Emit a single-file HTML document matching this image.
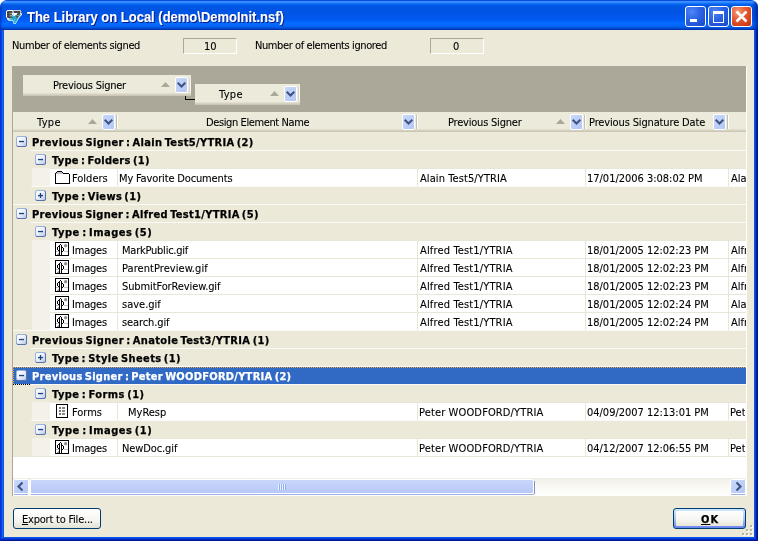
<!DOCTYPE html>
<html><head><meta charset="utf-8"><title>The Library on Local</title>
<style>
html,body{margin:0;padding:0;background:#fff;}
body{width:758px;height:541px;position:relative;overflow:hidden;font-family:'DejaVu Sans Condensed','Liberation Sans',sans-serif;font-size:11px;line-height:14px;color:#000;}
#win{position:absolute;left:0;top:0;width:758px;height:541px;border-radius:7px 7px 0 0;overflow:hidden;background:#ECE9D8;}
#win div,#win svg,#win span.t{position:absolute;}
span.t{white-space:pre;font-size:11px;line-height:14px;-webkit-text-stroke:0.1px currentColor;}
span.b{font-weight:bold;-webkit-text-stroke:0.25px currentColor;}
span.tt{color:#fff;font-family:'Liberation Sans',sans-serif;font-size:14px;line-height:17px;font-weight:bold;transform-origin:0 0;text-shadow:1px 1px 0 #0A1883;}
#title{left:0;top:0;width:758px;height:30px;background:linear-gradient(to bottom,#0A4CE0 0.5px,#3A90FF 1.5px,#2E88FF 2.5px,#1572F6 3.5px,#0662EC 4.5px,#0059E6 5.5px,#0057E5 6.5px,#0056E4 7.5px,#0055E3 8.5px,#0054E3 9.5px,#0054E3 10.5px,#0054E3 11.5px,#0054E3 12.5px,#0055E4 13.5px,#0055E6 14.5px,#0056E8 15.5px,#0057EA 16.5px,#0058EC 17.5px,#0059EF 18.5px,#005BF2 19.5px,#005EF6 20.5px,#0263FA 21.5px,#0368FD 22.5px,#046BFE 23.5px,#046AFD 24.5px,#0466F8 25.5px,#0460EE 26.5px,#0356E0 27.5px,#0248CC 28.5px,#0034B0 29.5px);}
.tb{width:19px;height:19px;border:1px solid #fff;border-radius:3px;top:6px;}
</style></head><body>
<div id="win">
<svg width="0" height="0" style="left:0;top:0"><defs>
<linearGradient id="eg" x1="0" y1="0" x2="1" y2="1"><stop offset="0" stop-color="#fff"/><stop offset="0.45" stop-color="#EEF2FC"/><stop offset="1" stop-color="#B4C5EA"/></linearGradient>
<linearGradient id="bg" x1="0" y1="0" x2="1" y2="1"><stop offset="0" stop-color="#C9D8FB"/><stop offset="1" stop-color="#B3C7F4"/></linearGradient>
</defs></svg>
<div id="title"></div>
<div style="left:752px;top:1px;width:6px;height:29px;background:linear-gradient(to right,rgba(0,30,170,0),rgba(0,24,150,0.75))"></div>
<div style="left:0;top:1px;width:3px;height:29px;background:linear-gradient(to right,rgba(0,30,170,0.55),rgba(0,30,170,0))"></div>
<!-- borders -->
<div style="left:0;top:30px;width:1px;height:511px;background:#0831D9"></div>
<div style="left:1px;top:30px;width:1px;height:511px;background:#0A42DE"></div>
<div style="left:2px;top:30px;width:1px;height:511px;background:#1466EE"></div>
<div style="left:3px;top:30px;width:1px;height:507px;background:#0A55E2"></div>
<div style="left:754px;top:30px;width:1px;height:507px;background:#1455E6"></div>
<div style="left:755px;top:30px;width:1px;height:511px;background:#0A3CD0"></div>
<div style="left:756px;top:30px;width:1px;height:511px;background:#0020A8"></div>
<div style="left:757px;top:30px;width:1px;height:511px;background:#00138C"></div>
<div style="left:3px;top:537px;width:752px;height:1px;background:#0A55E8"></div>
<div style="left:2px;top:538px;width:754px;height:1px;background:#0A3FD8"></div>
<div style="left:1px;top:539px;width:756px;height:1px;background:#0026C0"></div>
<div style="left:0;top:540px;width:758px;height:1px;background:#001A9A"></div>
<!-- app icon -->
<svg style="left:6px;top:10px" width="16" height="14" viewBox="0 0 16 14">
<path d="M1.4 0 H6.3 L7.2 0.6 L8 0 H14.2 L15.2 1 V3.4 L16 3.6 V4.8 L13 8 L11.6 10.6 L9.6 14 H7.8 L6.6 10.8 H2.6 L1 9.2 V8.2 L0 7 V1.4Z" fill="#fff"/>
<path d="M1 2 Q1 1 2 1 H6.4 V3.4 H3.6 V4 H6 V5.4 H3.6 V6.2 H6.4 V8 H2 Q1 8 1 7Z" fill="#484848"/>
<path d="M2.4 8.4 L6 8.2 L6.4 5 L7.6 4.2 L8.4 6.2 L9.6 5 L10.6 6.2 L12.4 4.2 L15.4 4.2 L12.4 7.4 L11 10.2 L9.4 13.4 H8.2 L7 10 L2.8 9.6Z" fill="#1BA4C9"/>
<path d="M7.6 0.7 H14.4 V2.9 L11.4 8 H8.8 L11.6 3 H7.6Z" fill="#484848"/>
<rect x="7" y="5.2" width="1" height="1" fill="#E8FAFF"/><rect x="9.4" y="6.8" width="1" height="1" fill="#A9E7F6"/><rect x="8.2" y="9.4" width="1" height="1" fill="#A9E7F6"/><rect x="11.6" y="5.2" width="0.9" height="0.9" fill="#E8FAFF"/><rect x="8.6" y="11.4" width="0.8" height="0.8" fill="#CFF3FB"/><rect x="10.4" y="8.4" width="0.8" height="0.8" fill="#0E86A8"/><rect x="6.4" y="7" width="0.8" height="0.8" fill="#0E86A8"/>
</svg>
<!-- title buttons -->
<div class="tb" style="left:685px;background:radial-gradient(circle at 30% 25%,#4F86F5 0%,#2A62E4 45%,#1846C8 100%)"></div>
<div style="left:690px;top:19px;width:7px;height:3px;background:#fff"></div>
<div class="tb" style="left:708px;background:radial-gradient(circle at 30% 25%,#4F86F5 0%,#2A62E4 45%,#1846C8 100%)"></div>
<div style="left:713px;top:11px;width:9px;height:8px;border:1px solid #fff;border-top-width:3px"></div>
<div class="tb" style="left:731px;background:radial-gradient(circle at 30% 25%,#F29C7A 0%,#E65A32 40%,#C4300C 100%)"></div>
<svg style="left:731px;top:6px" width="21" height="21" viewBox="0 0 21 21"><path d="M5.5 5.5 L15.5 15.5 M15.5 5.5 L5.5 15.5" stroke="#fff" stroke-width="2.6"/></svg>
<!-- counters -->
<div style="left:183px;top:38px;width:52px;height:14px;border:1px solid;border-color:#ACA899 #fff #fff #ACA899"></div>
<div style="left:430px;top:38px;width:52px;height:14px;border:1px solid;border-color:#ACA899 #fff #fff #ACA899"></div>
<!-- grid -->
<div style="left:12px;top:66px;width:735px;height:430px;background:#ECE9D8"></div>
<div style="left:12px;top:66px;width:734px;height:46px;background:#ACA899"></div>
<div style="left:12px;top:112px;width:1px;height:384px;background:#ACA899"></div>
<div style="left:746px;top:66px;width:1px;height:430px;background:#fff"></div>
<div style="left:13px;top:456px;width:733px;height:40px;background:#fff"></div>
<div style="left:13px;top:112px;width:733px;height:20px;background:#EBEADB"></div>
<div style="left:13px;top:129px;width:733px;height:1px;background:#E2DECD"></div>
<div style="left:13px;top:130px;width:733px;height:1px;background:#D6D2C2"></div>
<div style="left:13px;top:131px;width:733px;height:1px;background:#CBC7B8"></div>
<svg style="left:102px;top:114px" width="13" height="16" viewBox="0 0 13 16"><rect x="0.5" y="0.5" width="12" height="15" rx="1.5" fill="url(#bg)" stroke="#fff"/><path d="M2.7 5.7 L6.5 9.5 L10.3 5.7" fill="none" stroke="#3F5383" stroke-width="2.1"/></svg>
<div style="left:116px;top:115px;width:1px;height:14px;background:#C2BFB0"></div>
<div style="left:117px;top:115px;width:1px;height:14px;background:#fff"></div>
<svg style="left:402px;top:114px" width="13" height="16" viewBox="0 0 13 16"><rect x="0.5" y="0.5" width="12" height="15" rx="1.5" fill="url(#bg)" stroke="#fff"/><path d="M2.7 5.7 L6.5 9.5 L10.3 5.7" fill="none" stroke="#3F5383" stroke-width="2.1"/></svg>
<div style="left:416px;top:115px;width:1px;height:14px;background:#C2BFB0"></div>
<div style="left:417px;top:115px;width:1px;height:14px;background:#fff"></div>
<svg style="left:570px;top:114px" width="13" height="16" viewBox="0 0 13 16"><rect x="0.5" y="0.5" width="12" height="15" rx="1.5" fill="url(#bg)" stroke="#fff"/><path d="M2.7 5.7 L6.5 9.5 L10.3 5.7" fill="none" stroke="#3F5383" stroke-width="2.1"/></svg>
<div style="left:584px;top:115px;width:1px;height:14px;background:#C2BFB0"></div>
<div style="left:585px;top:115px;width:1px;height:14px;background:#fff"></div>
<svg style="left:713px;top:114px" width="13" height="16" viewBox="0 0 13 16"><rect x="0.5" y="0.5" width="12" height="15" rx="1.5" fill="url(#bg)" stroke="#fff"/><path d="M2.7 5.7 L6.5 9.5 L10.3 5.7" fill="none" stroke="#3F5383" stroke-width="2.1"/></svg>
<div style="left:727px;top:115px;width:1px;height:14px;background:#C2BFB0"></div>
<div style="left:728px;top:115px;width:1px;height:14px;background:#fff"></div>
<svg style="left:88px;top:119px" width="9" height="5" viewBox="0 0 9 5"><path d="M0 5 L4.5 0 L9 5Z" fill="#ACA899"/></svg>
<svg style="left:556px;top:119px" width="9" height="5" viewBox="0 0 9 5"><path d="M0 5 L4.5 0 L9 5Z" fill="#ACA899"/></svg>
<div style="left:23px;top:75px;width:168px;height:21px;background:#EBEADB"></div><div style="left:23px;top:93px;width:168px;height:1px;background:#E2DECD"></div><div style="left:23px;top:94px;width:168px;height:1px;background:#D6D2C2"></div><div style="left:23px;top:95px;width:168px;height:1px;background:#CBC7B8"></div>
<svg style="left:175px;top:77px" width="13" height="16" viewBox="0 0 13 16"><rect x="0.5" y="0.5" width="12" height="15" rx="1.5" fill="url(#bg)" stroke="#fff"/><path d="M2.7 5.7 L6.5 9.5 L10.3 5.7" fill="none" stroke="#3F5383" stroke-width="2.1"/></svg>
<svg style="left:161px;top:82px" width="9" height="5" viewBox="0 0 9 5"><path d="M0 5 L4.5 0 L9 5Z" fill="#ACA899"/></svg>
<div style="left:189px;top:78px;width:1px;height:14px;background:#D8D5C6"></div><div style="left:190px;top:78px;width:1px;height:14px;background:#F8F7F1"></div>
<div style="left:195px;top:84px;width:105px;height:21px;background:#EBEADB"></div><div style="left:195px;top:102px;width:105px;height:1px;background:#E2DECD"></div><div style="left:195px;top:103px;width:105px;height:1px;background:#D6D2C2"></div><div style="left:195px;top:104px;width:105px;height:1px;background:#CBC7B8"></div>
<svg style="left:284px;top:86px" width="13" height="16" viewBox="0 0 13 16"><rect x="0.5" y="0.5" width="12" height="15" rx="1.5" fill="url(#bg)" stroke="#fff"/><path d="M2.7 5.7 L6.5 9.5 L10.3 5.7" fill="none" stroke="#3F5383" stroke-width="2.1"/></svg>
<svg style="left:270px;top:91px" width="9" height="5" viewBox="0 0 9 5"><path d="M0 5 L4.5 0 L9 5Z" fill="#ACA899"/></svg>
<div style="left:298px;top:87px;width:1px;height:14px;background:#D8D5C6"></div><div style="left:299px;top:87px;width:1px;height:14px;background:#F8F7F1"></div>
<div style="left:185px;top:96px;width:1px;height:4px;background:#000"></div><div style="left:185px;top:99px;width:10px;height:1px;background:#000"></div>
<svg style="left:16px;top:136px" width="11" height="11" viewBox="0 0 11 11"><rect x="0.5" y="0.5" width="10" height="10" rx="1.5" fill="url(#eg)" stroke="#9CB2DE"/><path d="M0.8 9.6 Q1 10.5 2 10.5 H9 Q10.5 10.5 10.5 9 V2 Q10.4 1 9.6 0.8" fill="none" stroke="#5872AA"/><rect x="3" y="4.9" width="5" height="1.3" fill="#20407C"/></svg>
<div style="left:31px;top:150px;width:715px;height:1px;background:#FBFAF6;"></div>
<svg style="left:35px;top:154px" width="11" height="11" viewBox="0 0 11 11"><rect x="0.5" y="0.5" width="10" height="10" rx="1.5" fill="url(#eg)" stroke="#9CB2DE"/><path d="M0.8 9.6 Q1 10.5 2 10.5 H9 Q10.5 10.5 10.5 9 V2 Q10.4 1 9.6 0.8" fill="none" stroke="#5872AA"/><rect x="3" y="4.9" width="5" height="1.3" fill="#20407C"/></svg>
<div style="left:32px;top:168px;width:714px;height:18px;background:#F4F2E8;"></div>
<div style="left:50px;top:169px;width:696px;height:17px;background:#fff;"></div>
<div style="left:50px;top:168px;width:696px;height:1px;background:#E9E6D6;"></div>
<div style="left:117px;top:169px;width:1px;height:17px;background:#E9E6D6;"></div>
<div style="left:417px;top:169px;width:1px;height:17px;background:#E9E6D6;"></div>
<div style="left:585px;top:169px;width:1px;height:17px;background:#E9E6D6;"></div>
<div style="left:728px;top:169px;width:1px;height:17px;background:#E9E6D6;"></div>
<svg style="left:55px;top:171px" width="15" height="13" viewBox="0 0 15 13" shape-rendering="crispEdges"><rect x="1" y="1" width="13" height="11" fill="#fff"/><rect x="2" y="1" width="5" height="1" fill="#C0C0C0"/><rect x="1" y="2" width="7" height="1" fill="#C0C0C0"/><rect x="2" y="0" width="5" height="1" fill="#000"/><rect x="1" y="1" width="1" height="1" fill="#000"/><rect x="7" y="1" width="1" height="1" fill="#000"/><rect x="8" y="2" width="6" height="1" fill="#000"/><rect x="0" y="2" width="1" height="10" fill="#000"/><rect x="14" y="3" width="1" height="9" fill="#000"/><rect x="0" y="12" width="15" height="1" fill="#000"/></svg>
<div style="left:31px;top:186px;width:715px;height:1px;background:#FBFAF6;"></div>
<svg style="left:35px;top:190px" width="11" height="11" viewBox="0 0 11 11"><rect x="0.5" y="0.5" width="10" height="10" rx="1.5" fill="url(#eg)" stroke="#9CB2DE"/><path d="M0.8 9.6 Q1 10.5 2 10.5 H9 Q10.5 10.5 10.5 9 V2 Q10.4 1 9.6 0.8" fill="none" stroke="#5872AA"/><rect x="3" y="4.9" width="5" height="1.3" fill="#20407C"/><rect x="4.85" y="3" width="1.3" height="5" fill="#20407C"/></svg>
<div style="left:13px;top:204px;width:733px;height:1px;background:#FBFAF6;"></div>
<svg style="left:16px;top:208px" width="11" height="11" viewBox="0 0 11 11"><rect x="0.5" y="0.5" width="10" height="10" rx="1.5" fill="url(#eg)" stroke="#9CB2DE"/><path d="M0.8 9.6 Q1 10.5 2 10.5 H9 Q10.5 10.5 10.5 9 V2 Q10.4 1 9.6 0.8" fill="none" stroke="#5872AA"/><rect x="3" y="4.9" width="5" height="1.3" fill="#20407C"/></svg>
<div style="left:31px;top:222px;width:715px;height:1px;background:#FBFAF6;"></div>
<svg style="left:35px;top:226px" width="11" height="11" viewBox="0 0 11 11"><rect x="0.5" y="0.5" width="10" height="10" rx="1.5" fill="url(#eg)" stroke="#9CB2DE"/><path d="M0.8 9.6 Q1 10.5 2 10.5 H9 Q10.5 10.5 10.5 9 V2 Q10.4 1 9.6 0.8" fill="none" stroke="#5872AA"/><rect x="3" y="4.9" width="5" height="1.3" fill="#20407C"/></svg>
<div style="left:32px;top:240px;width:714px;height:18px;background:#F4F2E8;"></div>
<div style="left:50px;top:241px;width:696px;height:17px;background:#fff;"></div>
<div style="left:50px;top:240px;width:696px;height:1px;background:#E9E6D6;"></div>
<div style="left:117px;top:241px;width:1px;height:17px;background:#E9E6D6;"></div>
<div style="left:417px;top:241px;width:1px;height:17px;background:#E9E6D6;"></div>
<div style="left:585px;top:241px;width:1px;height:17px;background:#E9E6D6;"></div>
<div style="left:728px;top:241px;width:1px;height:17px;background:#E9E6D6;"></div>
<svg style="left:55px;top:242px" width="14" height="14" viewBox="0 0 14 14"><rect x="0.5" y="0.5" width="13" height="13" fill="#fff" stroke="#000"/><circle cx="10.6" cy="3.7" r="1.6" fill="#8C8C8C"/><g shape-rendering="crispEdges"><rect x="1" y="9" width="3" height="1" fill="#C4C4C4"/><rect x="9" y="9" width="4" height="1" fill="#C4C4C4"/><rect x="4" y="3" width="1" height="10" fill="#000"/><rect x="6" y="3" width="1" height="10" fill="#000"/><rect x="5" y="2" width="1" height="1" fill="#000"/><rect x="2" y="5" width="1" height="3" fill="#000"/><rect x="3" y="4" width="1" height="1" fill="#000"/><rect x="3" y="8" width="1" height="1" fill="#000"/><rect x="8" y="6" width="1" height="3" fill="#000"/><rect x="7" y="5" width="1" height="1" fill="#000"/><rect x="7" y="9" width="1" height="1" fill="#000"/><rect x="3" y="11" width="1" height="1" fill="#B0B0B0"/><rect x="2" y="12" width="2" height="1" fill="#9A9A9A"/></g></svg>
<div style="left:32px;top:258px;width:714px;height:18px;background:#F4F2E8;"></div>
<div style="left:50px;top:259px;width:696px;height:17px;background:#fff;"></div>
<div style="left:50px;top:258px;width:696px;height:1px;background:#E9E6D6;"></div>
<div style="left:117px;top:259px;width:1px;height:17px;background:#E9E6D6;"></div>
<div style="left:417px;top:259px;width:1px;height:17px;background:#E9E6D6;"></div>
<div style="left:585px;top:259px;width:1px;height:17px;background:#E9E6D6;"></div>
<div style="left:728px;top:259px;width:1px;height:17px;background:#E9E6D6;"></div>
<svg style="left:55px;top:260px" width="14" height="14" viewBox="0 0 14 14"><rect x="0.5" y="0.5" width="13" height="13" fill="#fff" stroke="#000"/><circle cx="10.6" cy="3.7" r="1.6" fill="#8C8C8C"/><g shape-rendering="crispEdges"><rect x="1" y="9" width="3" height="1" fill="#C4C4C4"/><rect x="9" y="9" width="4" height="1" fill="#C4C4C4"/><rect x="4" y="3" width="1" height="10" fill="#000"/><rect x="6" y="3" width="1" height="10" fill="#000"/><rect x="5" y="2" width="1" height="1" fill="#000"/><rect x="2" y="5" width="1" height="3" fill="#000"/><rect x="3" y="4" width="1" height="1" fill="#000"/><rect x="3" y="8" width="1" height="1" fill="#000"/><rect x="8" y="6" width="1" height="3" fill="#000"/><rect x="7" y="5" width="1" height="1" fill="#000"/><rect x="7" y="9" width="1" height="1" fill="#000"/><rect x="3" y="11" width="1" height="1" fill="#B0B0B0"/><rect x="2" y="12" width="2" height="1" fill="#9A9A9A"/></g></svg>
<div style="left:32px;top:276px;width:714px;height:18px;background:#F4F2E8;"></div>
<div style="left:50px;top:277px;width:696px;height:17px;background:#fff;"></div>
<div style="left:50px;top:276px;width:696px;height:1px;background:#E9E6D6;"></div>
<div style="left:117px;top:277px;width:1px;height:17px;background:#E9E6D6;"></div>
<div style="left:417px;top:277px;width:1px;height:17px;background:#E9E6D6;"></div>
<div style="left:585px;top:277px;width:1px;height:17px;background:#E9E6D6;"></div>
<div style="left:728px;top:277px;width:1px;height:17px;background:#E9E6D6;"></div>
<svg style="left:55px;top:278px" width="14" height="14" viewBox="0 0 14 14"><rect x="0.5" y="0.5" width="13" height="13" fill="#fff" stroke="#000"/><circle cx="10.6" cy="3.7" r="1.6" fill="#8C8C8C"/><g shape-rendering="crispEdges"><rect x="1" y="9" width="3" height="1" fill="#C4C4C4"/><rect x="9" y="9" width="4" height="1" fill="#C4C4C4"/><rect x="4" y="3" width="1" height="10" fill="#000"/><rect x="6" y="3" width="1" height="10" fill="#000"/><rect x="5" y="2" width="1" height="1" fill="#000"/><rect x="2" y="5" width="1" height="3" fill="#000"/><rect x="3" y="4" width="1" height="1" fill="#000"/><rect x="3" y="8" width="1" height="1" fill="#000"/><rect x="8" y="6" width="1" height="3" fill="#000"/><rect x="7" y="5" width="1" height="1" fill="#000"/><rect x="7" y="9" width="1" height="1" fill="#000"/><rect x="3" y="11" width="1" height="1" fill="#B0B0B0"/><rect x="2" y="12" width="2" height="1" fill="#9A9A9A"/></g></svg>
<div style="left:32px;top:294px;width:714px;height:18px;background:#F4F2E8;"></div>
<div style="left:50px;top:295px;width:696px;height:17px;background:#fff;"></div>
<div style="left:50px;top:294px;width:696px;height:1px;background:#E9E6D6;"></div>
<div style="left:117px;top:295px;width:1px;height:17px;background:#E9E6D6;"></div>
<div style="left:417px;top:295px;width:1px;height:17px;background:#E9E6D6;"></div>
<div style="left:585px;top:295px;width:1px;height:17px;background:#E9E6D6;"></div>
<div style="left:728px;top:295px;width:1px;height:17px;background:#E9E6D6;"></div>
<svg style="left:55px;top:296px" width="14" height="14" viewBox="0 0 14 14"><rect x="0.5" y="0.5" width="13" height="13" fill="#fff" stroke="#000"/><circle cx="10.6" cy="3.7" r="1.6" fill="#8C8C8C"/><g shape-rendering="crispEdges"><rect x="1" y="9" width="3" height="1" fill="#C4C4C4"/><rect x="9" y="9" width="4" height="1" fill="#C4C4C4"/><rect x="4" y="3" width="1" height="10" fill="#000"/><rect x="6" y="3" width="1" height="10" fill="#000"/><rect x="5" y="2" width="1" height="1" fill="#000"/><rect x="2" y="5" width="1" height="3" fill="#000"/><rect x="3" y="4" width="1" height="1" fill="#000"/><rect x="3" y="8" width="1" height="1" fill="#000"/><rect x="8" y="6" width="1" height="3" fill="#000"/><rect x="7" y="5" width="1" height="1" fill="#000"/><rect x="7" y="9" width="1" height="1" fill="#000"/><rect x="3" y="11" width="1" height="1" fill="#B0B0B0"/><rect x="2" y="12" width="2" height="1" fill="#9A9A9A"/></g></svg>
<div style="left:32px;top:312px;width:714px;height:18px;background:#F4F2E8;"></div>
<div style="left:50px;top:313px;width:696px;height:17px;background:#fff;"></div>
<div style="left:50px;top:312px;width:696px;height:1px;background:#E9E6D6;"></div>
<div style="left:117px;top:313px;width:1px;height:17px;background:#E9E6D6;"></div>
<div style="left:417px;top:313px;width:1px;height:17px;background:#E9E6D6;"></div>
<div style="left:585px;top:313px;width:1px;height:17px;background:#E9E6D6;"></div>
<div style="left:728px;top:313px;width:1px;height:17px;background:#E9E6D6;"></div>
<svg style="left:55px;top:314px" width="14" height="14" viewBox="0 0 14 14"><rect x="0.5" y="0.5" width="13" height="13" fill="#fff" stroke="#000"/><circle cx="10.6" cy="3.7" r="1.6" fill="#8C8C8C"/><g shape-rendering="crispEdges"><rect x="1" y="9" width="3" height="1" fill="#C4C4C4"/><rect x="9" y="9" width="4" height="1" fill="#C4C4C4"/><rect x="4" y="3" width="1" height="10" fill="#000"/><rect x="6" y="3" width="1" height="10" fill="#000"/><rect x="5" y="2" width="1" height="1" fill="#000"/><rect x="2" y="5" width="1" height="3" fill="#000"/><rect x="3" y="4" width="1" height="1" fill="#000"/><rect x="3" y="8" width="1" height="1" fill="#000"/><rect x="8" y="6" width="1" height="3" fill="#000"/><rect x="7" y="5" width="1" height="1" fill="#000"/><rect x="7" y="9" width="1" height="1" fill="#000"/><rect x="3" y="11" width="1" height="1" fill="#B0B0B0"/><rect x="2" y="12" width="2" height="1" fill="#9A9A9A"/></g></svg>
<div style="left:13px;top:330px;width:733px;height:1px;background:#FBFAF6;"></div>
<svg style="left:16px;top:334px" width="11" height="11" viewBox="0 0 11 11"><rect x="0.5" y="0.5" width="10" height="10" rx="1.5" fill="url(#eg)" stroke="#9CB2DE"/><path d="M0.8 9.6 Q1 10.5 2 10.5 H9 Q10.5 10.5 10.5 9 V2 Q10.4 1 9.6 0.8" fill="none" stroke="#5872AA"/><rect x="3" y="4.9" width="5" height="1.3" fill="#20407C"/></svg>
<div style="left:31px;top:348px;width:715px;height:1px;background:#FBFAF6;"></div>
<svg style="left:35px;top:352px" width="11" height="11" viewBox="0 0 11 11"><rect x="0.5" y="0.5" width="10" height="10" rx="1.5" fill="url(#eg)" stroke="#9CB2DE"/><path d="M0.8 9.6 Q1 10.5 2 10.5 H9 Q10.5 10.5 10.5 9 V2 Q10.4 1 9.6 0.8" fill="none" stroke="#5872AA"/><rect x="3" y="4.9" width="5" height="1.3" fill="#20407C"/><rect x="4.85" y="3" width="1.3" height="5" fill="#20407C"/></svg>
<div style="left:13px;top:366px;width:733px;height:1px;background:#FBFAF6;"></div>
<div style="left:13px;top:367px;width:733px;height:17px;background:#316AC5;"></div>
<div style="left:13px;top:367px;width:733px;height:1px;background:repeating-linear-gradient(90deg,#E8A040 0 1px,transparent 1px 2px);"></div>
<div style="left:13px;top:367px;width:1px;height:17px;background:repeating-linear-gradient(180deg,#F0A030 0 1px,transparent 1px 2px);"></div>
<svg style="left:16px;top:370px" width="11" height="11" viewBox="0 0 11 11"><rect x="0.5" y="0.5" width="10" height="10" rx="1.5" fill="url(#eg)" stroke="#9CB2DE"/><path d="M0.8 9.6 Q1 10.5 2 10.5 H9 Q10.5 10.5 10.5 9 V2 Q10.4 1 9.6 0.8" fill="none" stroke="#5872AA"/><rect x="3" y="4.9" width="5" height="1.3" fill="#20407C"/></svg>
<div style="left:31px;top:384px;width:715px;height:1px;background:#FBFAF6;"></div>
<svg style="left:35px;top:388px" width="11" height="11" viewBox="0 0 11 11"><rect x="0.5" y="0.5" width="10" height="10" rx="1.5" fill="url(#eg)" stroke="#9CB2DE"/><path d="M0.8 9.6 Q1 10.5 2 10.5 H9 Q10.5 10.5 10.5 9 V2 Q10.4 1 9.6 0.8" fill="none" stroke="#5872AA"/><rect x="3" y="4.9" width="5" height="1.3" fill="#20407C"/></svg>
<div style="left:32px;top:402px;width:714px;height:18px;background:#F4F2E8;"></div>
<div style="left:50px;top:403px;width:696px;height:17px;background:#fff;"></div>
<div style="left:50px;top:402px;width:696px;height:1px;background:#E9E6D6;"></div>
<div style="left:117px;top:403px;width:1px;height:17px;background:#E9E6D6;"></div>
<div style="left:417px;top:403px;width:1px;height:17px;background:#E9E6D6;"></div>
<div style="left:585px;top:403px;width:1px;height:17px;background:#E9E6D6;"></div>
<div style="left:728px;top:403px;width:1px;height:17px;background:#E9E6D6;"></div>
<svg style="left:56px;top:404px" width="12" height="14" viewBox="0 0 12 14" shape-rendering="crispEdges"><rect x="0.5" y="0.5" width="11" height="13" fill="#fff" stroke="#000"/><rect x="3" y="3" width="1.5" height="1.6" fill="#777"/><rect x="6" y="3" width="3" height="1.6" fill="#888"/><rect x="3" y="6" width="1.5" height="1.6" fill="#777"/><rect x="6" y="6" width="3" height="1.6" fill="#888"/><rect x="3" y="9" width="1.5" height="1.6" fill="#777"/><rect x="6" y="9" width="3" height="1.6" fill="#888"/></svg>
<div style="left:31px;top:420px;width:715px;height:1px;background:#FBFAF6;"></div>
<svg style="left:35px;top:424px" width="11" height="11" viewBox="0 0 11 11"><rect x="0.5" y="0.5" width="10" height="10" rx="1.5" fill="url(#eg)" stroke="#9CB2DE"/><path d="M0.8 9.6 Q1 10.5 2 10.5 H9 Q10.5 10.5 10.5 9 V2 Q10.4 1 9.6 0.8" fill="none" stroke="#5872AA"/><rect x="3" y="4.9" width="5" height="1.3" fill="#20407C"/></svg>
<div style="left:32px;top:438px;width:714px;height:18px;background:#F4F2E8;"></div>
<div style="left:50px;top:439px;width:696px;height:17px;background:#fff;"></div>
<div style="left:50px;top:438px;width:696px;height:1px;background:#E9E6D6;"></div>
<div style="left:117px;top:439px;width:1px;height:17px;background:#E9E6D6;"></div>
<div style="left:417px;top:439px;width:1px;height:17px;background:#E9E6D6;"></div>
<div style="left:585px;top:439px;width:1px;height:17px;background:#E9E6D6;"></div>
<div style="left:728px;top:439px;width:1px;height:17px;background:#E9E6D6;"></div>
<svg style="left:55px;top:440px" width="14" height="14" viewBox="0 0 14 14"><rect x="0.5" y="0.5" width="13" height="13" fill="#fff" stroke="#000"/><circle cx="10.6" cy="3.7" r="1.6" fill="#8C8C8C"/><g shape-rendering="crispEdges"><rect x="1" y="9" width="3" height="1" fill="#C4C4C4"/><rect x="9" y="9" width="4" height="1" fill="#C4C4C4"/><rect x="4" y="3" width="1" height="10" fill="#000"/><rect x="6" y="3" width="1" height="10" fill="#000"/><rect x="5" y="2" width="1" height="1" fill="#000"/><rect x="2" y="5" width="1" height="3" fill="#000"/><rect x="3" y="4" width="1" height="1" fill="#000"/><rect x="3" y="8" width="1" height="1" fill="#000"/><rect x="8" y="6" width="1" height="3" fill="#000"/><rect x="7" y="5" width="1" height="1" fill="#000"/><rect x="7" y="9" width="1" height="1" fill="#000"/><rect x="3" y="11" width="1" height="1" fill="#B0B0B0"/><rect x="2" y="12" width="2" height="1" fill="#9A9A9A"/></g></svg>
<div style="left:13px;top:456px;width:733px;height:1px;background:#E9E6D6;"></div>
<div style="left:13px;top:384px;width:18px;height:1px;background:repeating-linear-gradient(90deg,#000 0 1px,transparent 1px 2px);"></div>
<!-- scrollbar -->
<div style="left:13px;top:478px;width:733px;height:17px;background:linear-gradient(to bottom,#EEEDE5 0%,#F6F5F0 30%,#FEFEFB 100%)"></div>
<div style="left:13px;top:495px;width:733px;height:1px;background:#fff"></div>
<!-- left btn -->
<div style="left:13px;top:479px;width:14px;height:13px;border:1px solid #fff;border-radius:2px;background:linear-gradient(135deg,#CAD8FB,#B4C7F4)"></div>
<div style="left:14px;top:494px;width:14px;height:1px;background:#9DB2E2"></div>
<svg style="left:16px;top:481px" width="9" height="11" viewBox="0 0 9 11"><path d="M6.5 1.5 L2.5 5.5 L6.5 9.5" fill="none" stroke="#3F5383" stroke-width="2.1"/></svg>
<!-- thumb -->
<div style="left:30px;top:479px;width:502px;height:13px;border:1px solid #fff;border-radius:2px;background:linear-gradient(to bottom,#C8D6FB 0%,#C1D0F8 50%,#B6C8F5 100%)"></div>
<div style="left:31px;top:494px;width:503px;height:1px;background:#9DB2E2"></div>
<div style="left:534px;top:481px;width:1px;height:13px;background:#7C94C8"></div>
<div style="left:278px;top:484px;width:8px;height:6px;background:repeating-linear-gradient(90deg,#EEF4FE 0 1px,#8CB0F8 1px 2px)"></div>
<!-- right btn -->
<div style="left:730px;top:479px;width:14px;height:13px;border:1px solid #fff;border-radius:2px;background:linear-gradient(135deg,#CAD8FB,#B4C7F4)"></div>
<div style="left:731px;top:494px;width:14px;height:1px;background:#9DB2E2"></div>
<svg style="left:734px;top:481px" width="9" height="11" viewBox="0 0 9 11"><path d="M2.5 1.5 L6.5 5.5 L2.5 9.5" fill="none" stroke="#3F5383" stroke-width="2.1"/></svg>
<!-- buttons -->
<div style="left:13px;top:508px;width:86px;height:19px;border:1px solid #003C74;border-radius:3px;background:linear-gradient(to bottom,#fff 0%,#F6F5F0 60%,#E4E1D4 100%)"></div>
<div style="left:673px;top:508px;width:71px;height:19px;border:1px solid #003C74;border-radius:3px;background:linear-gradient(to bottom,#CEE7FF 0%,#B8D2F6 40%,#8AAAE8 75%,#6982EE 100%)"></div>
<div style="left:676px;top:511px;width:67px;height:15px;border-radius:1px;background:linear-gradient(to bottom,#fff 0%,#F6F5F0 60%,#E8E5D8 100%)"></div>
<!-- grip -->
<svg style="left:741px;top:524px" width="12" height="12" viewBox="0 0 12 12" shape-rendering="crispEdges">
<g fill="#fff"><rect x="10" y="2" width="2" height="2"/><rect x="6" y="6" width="2" height="2"/><rect x="10" y="6" width="2" height="2"/><rect x="2" y="10" width="2" height="2"/><rect x="6" y="10" width="2" height="2"/><rect x="10" y="10" width="2" height="2"/></g>
<g fill="#B8B4A2"><rect x="9" y="1" width="2" height="2"/><rect x="5" y="5" width="2" height="2"/><rect x="9" y="5" width="2" height="2"/><rect x="1" y="9" width="2" height="2"/><rect x="5" y="9" width="2" height="2"/><rect x="9" y="9" width="2" height="2"/></g>
</svg>
<div id="tx" style="left:0;top:0;width:758px;height:541px;will-change:transform">
<span class="t" style="left:12px;top:39px;letter-spacing:-0.38px;">Number of elements signed</span>
<span class="t" style="left:204px;top:40px;">10</span>
<span class="t" style="left:255px;top:39px;letter-spacing:-0.4px;">Number of elements ignored</span>
<span class="t" style="left:453px;top:40px;">0</span>
<span class="t" style="left:53px;top:79px;letter-spacing:-0.25px;">Previous Signer</span>
<span class="t" style="left:219px;top:88px;letter-spacing:0.33px;">Type</span>
<span class="t" style="left:37px;top:116px;letter-spacing:0.33px;">Type</span>
<span class="t" style="left:206px;top:116px;letter-spacing:-0.39px;">Design Element Name</span>
<span class="t" style="left:448px;top:116px;letter-spacing:-0.21px;">Previous Signer</span>
<span class="t" style="left:589px;top:116px;letter-spacing:-0.14px;">Previous Signature Date</span>
<span class="t b" style="left:32px;top:136px;letter-spacing:0.34px;word-spacing:-1.5px;">Previous Signer : Alain Test5/YTRIA (2)</span>
<span class="t b" style="left:52px;top:154px;letter-spacing:0.29px;word-spacing:-1.5px;">Type : Folders (1)</span>
<span class="t" style="left:72px;top:172px;">Folders</span>
<span class="t" style="left:119px;top:172px;letter-spacing:-0.15px;">My Favorite Documents</span>
<span class="t" style="left:420px;top:172px;letter-spacing:0.09px;">Alain Test5/YTRIA</span>
<span class="t" style="left:587px;top:172px;letter-spacing:-0.02px;">17/01/2006 3:08:02 PM</span>
<span class="t" style="left:731px;top:172px;width:15px;overflow:hidden;">Ala</span>
<span class="t b" style="left:52px;top:190px;letter-spacing:0.33px;word-spacing:-1.5px;">Type : Views (1)</span>
<span class="t b" style="left:32px;top:208px;letter-spacing:0.31px;word-spacing:-1.5px;">Previous Signer : Alfred Test1/YTRIA (5)</span>
<span class="t b" style="left:52px;top:226px;letter-spacing:0.5px;word-spacing:-1.5px;">Type : Images (5)</span>
<span class="t" style="left:72px;top:244px;letter-spacing:-0.2px;">Images</span>
<span class="t" style="left:122px;top:244px;letter-spacing:-0.23px;">MarkPublic.gif</span>
<span class="t" style="left:420px;top:244px;letter-spacing:0.15px;">Alfred Test1/YTRIA</span>
<span class="t" style="left:587px;top:244px;letter-spacing:-0.02px;">18/01/2005 12:02:23 PM</span>
<span class="t" style="left:731px;top:244px;width:15px;overflow:hidden;">Alfr</span>
<span class="t" style="left:72px;top:262px;letter-spacing:-0.2px;">Images</span>
<span class="t" style="left:122px;top:262px;letter-spacing:0.06px;">ParentPreview.gif</span>
<span class="t" style="left:420px;top:262px;letter-spacing:0.15px;">Alfred Test1/YTRIA</span>
<span class="t" style="left:587px;top:262px;letter-spacing:-0.02px;">18/01/2005 12:02:23 PM</span>
<span class="t" style="left:731px;top:262px;width:15px;overflow:hidden;">Alfr</span>
<span class="t" style="left:72px;top:280px;letter-spacing:-0.2px;">Images</span>
<span class="t" style="left:122px;top:280px;letter-spacing:-0.11px;">SubmitForReview.gif</span>
<span class="t" style="left:420px;top:280px;letter-spacing:0.15px;">Alfred Test1/YTRIA</span>
<span class="t" style="left:587px;top:280px;letter-spacing:-0.02px;">18/01/2005 12:02:23 PM</span>
<span class="t" style="left:731px;top:280px;width:15px;overflow:hidden;">Alfr</span>
<span class="t" style="left:72px;top:298px;letter-spacing:-0.2px;">Images</span>
<span class="t" style="left:122px;top:298px;">save.gif</span>
<span class="t" style="left:420px;top:298px;letter-spacing:0.15px;">Alfred Test1/YTRIA</span>
<span class="t" style="left:587px;top:298px;letter-spacing:-0.02px;">18/01/2005 12:02:24 PM</span>
<span class="t" style="left:731px;top:298px;width:15px;overflow:hidden;">Ala</span>
<span class="t" style="left:72px;top:316px;letter-spacing:-0.2px;">Images</span>
<span class="t" style="left:122px;top:316px;letter-spacing:-0.11px;">search.gif</span>
<span class="t" style="left:420px;top:316px;letter-spacing:0.15px;">Alfred Test1/YTRIA</span>
<span class="t" style="left:587px;top:316px;letter-spacing:-0.02px;">18/01/2005 12:02:24 PM</span>
<span class="t" style="left:731px;top:316px;width:15px;overflow:hidden;">Alfr</span>
<span class="t b" style="left:32px;top:334px;letter-spacing:0.35px;word-spacing:-1.5px;">Previous Signer : Anatole Test3/YTRIA (1)</span>
<span class="t b" style="left:52px;top:352px;letter-spacing:0.39px;word-spacing:-1.5px;">Type : Style Sheets (1)</span>
<span class="t b" style="left:32px;top:370px;color:#fff;letter-spacing:0.27px;word-spacing:-1.5px;">Previous Signer : Peter WOODFORD/YTRIA (2)</span>
<span class="t b" style="left:52px;top:388px;letter-spacing:0.43px;word-spacing:-1.5px;">Type : Forms (1)</span>
<span class="t" style="left:72px;top:406px;">Forms</span>
<span class="t" style="left:128px;top:406px;">MyResp</span>
<span class="t" style="left:419px;top:406px;letter-spacing:0.13px;">Peter WOODFORD/YTRIA</span>
<span class="t" style="left:587px;top:406px;letter-spacing:-0.02px;">04/09/2007 12:13:01 PM</span>
<span class="t" style="left:730px;top:406px;width:15px;overflow:hidden;">Pet</span>
<span class="t b" style="left:52px;top:424px;letter-spacing:0.5px;word-spacing:-1.5px;">Type : Images (1)</span>
<span class="t" style="left:72px;top:442px;letter-spacing:-0.2px;">Images</span>
<span class="t" style="left:122px;top:442px;letter-spacing:-0.11px;">NewDoc.gif</span>
<span class="t" style="left:419px;top:442px;letter-spacing:0.13px;">Peter WOODFORD/YTRIA</span>
<span class="t" style="left:587px;top:442px;letter-spacing:-0.02px;">04/12/2007 12:06:55 PM</span>
<span class="t" style="left:730px;top:442px;width:15px;overflow:hidden;">Pet</span>
<span class="t" style="left:22px;top:513px;letter-spacing:-0.22px;"><u>E</u>xport to File...</span>
<span class="t b" style="left:701px;top:513px;letter-spacing:1.0px;"><u>O</u>K</span>
<span class="t tt" style="left:27.0px;top:9px;transform:scaleX(0.9275);">The Library on Local (demo\DemoInit.nsf)</span>
</div>
</div>
</body></html>
